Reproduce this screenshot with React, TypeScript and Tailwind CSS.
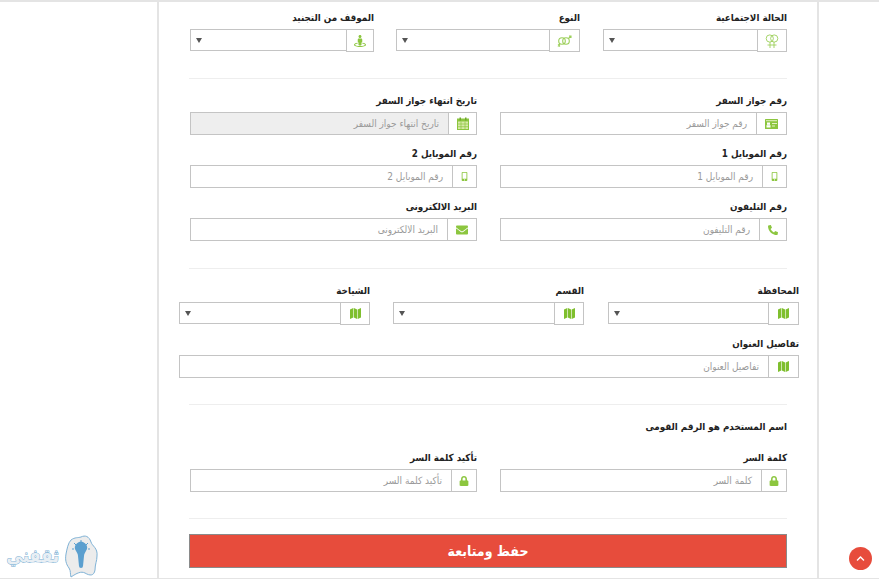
import React from "react";
import {FaChevronUp, FaEnvelope, FaLock, FaMobileAlt, FaPhoneAlt, FaStreetView} from "react-icons/fa";

const font = '"DejaVu Sans Condensed", "DejaVu Sans", sans-serif';

const RingsIcon = () => (
    <svg viewBox="0 0 14 14" className="w-[14px] h-[14px]" fill="none" stroke="#9ccf5a" strokeWidth="0.9">
        <circle cx="4.8" cy="4.5" r="3.6"/>
        <circle cx="9.2" cy="4.5" r="3.6"/>
        <path d="M5 8v6M9 8v6M2.5 11h9"/>
    </svg>
);

const GenderIcon = () => (
    <svg viewBox="0 0 15 12" className="w-[15px] h-[12px]" fill="none" stroke="#9ccf5a" strokeWidth="1.1">
        <circle cx="5" cy="6" r="3.3"/>
        <circle cx="9" cy="6" r="3.3"/>
        <path d="M3 9l-2 2.5M1 9.5l2 2"/>
        <path d="M11.5 3.5l2.5-2.5M12 1h2v2"/>
    </svg>
);

const CalendarIcon = () => (
    <svg viewBox="0 0 12 13" className="w-[12px] h-[13px]">
        <rect x="0.5" y="2" width="11" height="10.5" fill="#d8eaa8" stroke="#8cc63f"/>
        <rect x="0.5" y="2" width="11" height="2.5" fill="#8cc63f"/>
        <rect x="2.5" y="0.5" width="1.5" height="3" fill="#6fa82c"/>
        <rect x="8" y="0.5" width="1.5" height="3" fill="#6fa82c"/>
        <path d="M4 4.5v8M8 4.5v8M0.5 7h11M0.5 9.7h11" stroke="#8cc63f" strokeWidth="0.7"/>
    </svg>
);

const CardIcon = () => (
    <svg viewBox="0 0 13 10" className="w-[13px] h-[10px]">
        <rect width="13" height="10" rx="0.5" fill="#8cc63f"/>
        <rect x="1" y="1.2" width="11" height="1" fill="#e4f2c4"/>
        <rect x="2" y="3.5" width="3" height="2.3" fill="#fff"/>
        <rect x="1.5" y="6.2" width="4" height="2.3" fill="#fff"/>
        <rect x="7" y="4" width="5" height="1" fill="#e4f2c4"/>
        <rect x="7" y="6.5" width="3" height="1" fill="#e4f2c4"/>
    </svg>
);

const MapIcon = () => (
    <svg viewBox="0 0 11 11" className="w-[11px] h-[11px]" fill="#7fbf2e">
        <path d="M0 1.5L3.3 0v9.5L0 11zM3.9 0l3.2 1.5V11L3.9 9.5zM7.7 1.5L11 0v9.5L7.7 11z"/>
    </svg>
);

interface FieldProps {
    label: string;
    icon: React.ReactNode;
    addon: string;
    width: string;
    placeholder?: string;
    select?: boolean;
    disabled?: boolean;
}

const Field: React.FC<FieldProps> = ({label, icon, addon, width, placeholder, select, disabled}) => (
    <div className={width}>
        <div className="h-[17px] text-[9.75px] leading-[17px] font-bold text-[#222]">{label}</div>
        <div className="flex mt-[3px] items-start">
            <div className={`${addon} h-[23px] shrink-0 border border-[#c4c4c4] flex items-center justify-center text-[#8cc63f] text-[12px]`}>
                {icon}
            </div>
            {select ? (
                <div className="flex-1 h-[22px] border border-r-0 border-[#c4c4c4] bg-white flex items-center pl-[5px]">
                    <div className="w-0 h-0 mr-auto border-x-[3px] border-x-transparent border-t-[5px] border-t-[#555]"/>
                </div>
            ) : (
                <div className={`flex-1 h-[23px] border border-r-0 border-[#c4c4c4] pr-[9px] text-[10px] leading-[21px] text-[#9a9a9a] ${disabled ? "bg-[#eeeeee]" : "bg-white"}`}>
                    {placeholder}
                </div>
            )}
        </div>
    </div>
);

export default function App() {
    return (
        <div dir="rtl" className="relative w-[879px] h-[579px] overflow-hidden bg-white border-t-2 border-b border-[#e4e4e4]" style={{fontFamily: font}}>
            <div className="ml-[157px] mr-[60px] h-full border-x-2 border-[#e4e4e4]">
                {/* first group */}
                <div className="pr-[30px] pl-[31px] pt-[7px]">
                    <div className="flex">
                        <Field label="الحالة الاجتماعية" icon={<RingsIcon/>} addon="w-[30px]" width="w-[184px]" select/>
                        <Field label="النوع" icon={<GenderIcon/>} addon="w-[31px]" width="w-[184px] mr-[23px]" select/>
                        <Field label="الموقف من التجنيد" icon={<FaStreetView/>} addon="w-[28px]" width="w-[184px] mr-[22px]" select/>
                    </div>
                    <hr className="mt-[26px] -ml-px border-[#eeeeee]"/>
                    <div className="grid grid-cols-[287px_287px] justify-between gap-y-[10px] mt-[13px]">
                        <Field label="رقم جواز السفر" icon={<CardIcon/>} addon="w-[31px]" width="w-[287px]" placeholder="رقم جواز السفر"/>
                        <Field label="تاريخ انتهاء جواز السفر" icon={<CalendarIcon/>} addon="w-[29px]" width="w-[287px]" placeholder="تاريخ انتهاء جواز السفر" disabled/>
                        <Field label="رقم الموبايل 1" icon={<FaMobileAlt className="text-[9px]"/>} addon="w-[25px]" width="w-[287px]" placeholder="رقم الموبايل 1"/>
                        <Field label="رقم الموبايل 2" icon={<FaMobileAlt className="text-[9px]"/>} addon="w-[25px]" width="w-[287px]" placeholder="رقم الموبايل 2"/>
                        <Field label="رقم التليفون" icon={<FaPhoneAlt className="text-[10px]"/>} addon="w-[28px]" width="w-[287px]" placeholder="رقم التليفون"/>
                        <Field label="البريد الالكترونى" icon={<FaEnvelope/>} addon="w-[30px]" width="w-[287px]" placeholder="البريد الالكترونى"/>
                    </div>
                    <hr className="mt-[27px] -ml-px border-[#eeeeee]"/>
                </div>

                {/* address */}
                <div className="pr-[18px] pl-[20px] mt-[13px]">
                    <div className="flex">
                        <Field label="المحافظة" icon={<MapIcon/>} addon="w-[31px]" width="w-[191px]" select/>
                        <Field label="القسم" icon={<MapIcon/>} addon="w-[30px]" width="w-[191px] mr-[24px]" select/>
                        <Field label="الشياخة" icon={<MapIcon/>} addon="w-[30px]" width="w-[191px] mr-[23px]" select/>
                    </div>
                    <div className="mt-[10px]">
                        <Field label="تفاصيل العنوان" icon={<MapIcon/>} addon="w-[31px]" width="w-full" placeholder="تفاصيل العنوان"/>
                    </div>
                </div>

                {/* password */}
                <div className="pr-[30px] pl-[31px]">
                    <hr className="mt-[26px] -ml-px border-[#eeeeee]"/>
                    <div className="mt-[13px] h-[17px] text-[9.75px] leading-[17px] font-bold text-[#222]">اسم المستخدم هو الرقم القومى</div>
                    <div className="flex justify-between mt-[14px]">
                        <Field label="كلمة السر" icon={<FaLock className="text-[10px]"/>} addon="w-[26px]" width="w-[287px]" placeholder="كلمة السر"/>
                        <Field label="تأكيد كلمة السر" icon={<FaLock className="text-[10px]"/>} addon="w-[26px]" width="w-[287px]" placeholder="تأكيد كلمة السر"/>
                    </div>
                    <hr className="mt-[26px] -ml-px border-[#eeeeee]"/>
                    <button className="block mt-[15px] w-[598px] h-[34px] bg-[#e74c3c] border border-[#8a8a8a] text-white text-[14px] font-bold">حفظ ومتابعة</button>
                </div>
            </div>

            {/* scroll top */}
            <div className="absolute left-[849px] top-[545px] w-[23px] h-[23px] rounded-full bg-[#e74c3c] flex items-center justify-center text-white text-[9px]">
                <FaChevronUp/>
            </div>

            {/* logo */}
            <div dir="rtl" className="absolute left-[4px] top-[531px] w-[95px] h-[46px] flex items-center gap-[6px]">
                <svg viewBox="0 0 34 44" className="w-[34px] h-[44px] shrink-0">
                    <path d="M6 6 C10 3 13 4 16 3 C20 1 24 2 26 8 C27 12 33 14 32 22 C32 27 30 30 30 36 C29 42 25 42 20 39 C16 37 12 39 6 43 C5 40 6 37 4 34 C1 30 0 26 1 20 C2 15 3 9 6 6 Z" fill="#ececec" stroke="#7fb2d6" strokeWidth="1"/>
                    <path d="M11 17 a6 6 0 1 1 10 0 c-1 2 -2 3 -2 5 l-1 10 a2 2 0 0 1 -4 0 l-1 -10 c0 -2 -1 -3 -2 -5 Z" fill="#5b9fcf"/>
                    <path d="M16 6 v3 M9 9 l2 2 M23 9 l-2 2 M7 15 h2 M25 15 h-2" stroke="#5b9fcf" strokeWidth="1"/>
                </svg>
                <span className="text-[18px] leading-none font-bold text-[#e9eff4] [-webkit-text-stroke:1px_#7fb2d6] [paint-order:stroke_fill]">ثقفني</span>
            </div>
        </div>
    );
}
